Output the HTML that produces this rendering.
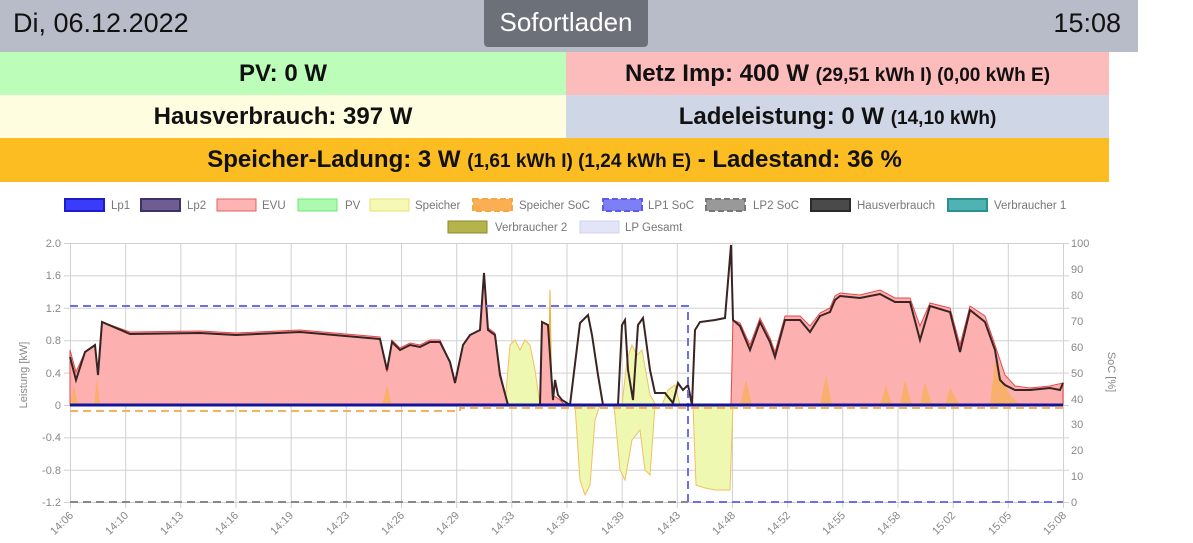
<!DOCTYPE html>
<html><head><meta charset="utf-8"><style>
body{margin:0;width:1193px;height:543px;background:#fff;font-family:"Liberation Sans",sans-serif;overflow:hidden;position:relative}
.hdr{position:absolute;left:0;top:0;width:1138px;height:52px;background:#b8bcc8}
.date{position:absolute;left:13px;top:8px;font-size:27px;color:#111}
.time{position:absolute;right:17px;top:8px;font-size:27px;color:#111}
.mode{position:absolute;left:484px;top:0;width:164px;height:47px;background:#6c7079;border-radius:0 0 4px 4px;color:#fff;font-size:26px;text-align:center;line-height:44px}
.row{position:absolute;height:43px;line-height:43px;text-align:center;font-weight:bold;font-size:24px;color:#111}
.row small{font-size:19px}
</style></head><body>
<div class="hdr"><div class="date">Di, 06.12.2022</div><div class="mode">Sofortladen</div><div class="time">15:08</div></div>
<div class="row" style="left:0;top:52px;width:566px;background:#bcfdba">PV: 0 W</div>
<div class="row" style="left:566px;top:52px;width:543px;background:#fdbcbc">Netz Imp: 400 W <small>(29,51 kWh I) (0,00 kWh E)</small></div>
<div class="row" style="left:0;top:95px;width:566px;background:#fefddf">Hausverbrauch: 397 W</div>
<div class="row" style="left:566px;top:95px;width:543px;background:#cfd6e5">Ladeleistung: 0 W <small>(14,10 kWh)</small></div>
<div class="row" style="left:0;top:138px;width:1109px;height:44px;background:#fbbd21">Speicher-Ladung: 3 W <small>(1,61 kWh I) (1,24 kWh E)</small> - Ladestand: 36 %</div>
<svg style="position:absolute;left:0;top:0" width="1193" height="543" font-family="Liberation Sans, sans-serif" font-size="11" fill="#666">
<g font-size="11.5" fill="#777">
<rect x="65" y="199" width="39" height="12" fill="#3b3bfc" stroke="#1c1cc8" stroke-width="2"/><text x="111" y="209">Lp1</text>
<rect x="141" y="199" width="39" height="12" fill="#6e5d93" stroke="#3d3168" stroke-width="2"/><text x="187" y="209">Lp2</text>
<rect x="217" y="199" width="39" height="12" fill="#feb4b4" stroke="#e06060" stroke-width="1"/><text x="262" y="209">EVU</text>
<rect x="298" y="199" width="39" height="12" fill="#aef9b0" stroke="#6ce870" stroke-width="1"/><text x="345" y="209">PV</text>
<rect x="370" y="199" width="39" height="12" fill="#f6f9b5" stroke="#e8e070" stroke-width="1"/><text x="415" y="209">Speicher</text>
<rect x="473" y="199" width="39" height="12" fill="#fbae52" stroke="#f6a840" stroke-width="2" stroke-dasharray="6,3"/><text x="519" y="209">Speicher SoC</text>
<rect x="603" y="199" width="39" height="12" fill="#7d7ff5" stroke="#5a5ced" stroke-width="2" stroke-dasharray="6,3"/><text x="648" y="209">LP1 SoC</text>
<rect x="706" y="199" width="39" height="12" fill="#999" stroke="#777" stroke-width="2" stroke-dasharray="6,3"/><text x="753" y="209">LP2 SoC</text>
<rect x="811" y="199" width="39" height="12" fill="#4a4a4a" stroke="#2a2a2a" stroke-width="2"/><text x="857" y="209">Hausverbrauch</text>
<rect x="948" y="199" width="39" height="12" fill="#4fb3b3" stroke="#2a9090" stroke-width="2"/><text x="994" y="209">Verbraucher 1</text>
<rect x="448" y="221" width="39" height="12" fill="#b4b34c" stroke="#8c8a28" stroke-width="1"/><text x="495" y="231">Verbraucher 2</text>
<rect x="580" y="221" width="39" height="12" fill="#e4e4f9" stroke="#cfd0f0" stroke-width="1"/><text x="625" y="231">LP Gesamt</text>
</g>
<g stroke="#d0d0d0" stroke-width="1">
<line x1="64" y1="243.5" x2="1069" y2="243.5"/><line x1="64" y1="275.9" x2="1069" y2="275.9"/><line x1="64" y1="308.3" x2="1069" y2="308.3"/><line x1="64" y1="340.7" x2="1069" y2="340.7"/><line x1="64" y1="373.1" x2="1069" y2="373.1"/><line x1="64" y1="405.5" x2="1069" y2="405.5"/><line x1="64" y1="437.9" x2="1069" y2="437.9"/><line x1="64" y1="470.3" x2="1069" y2="470.3"/><line x1="64" y1="502.5" x2="1069" y2="502.5"/>
<line x1="70.5" y1="243" x2="70.5" y2="508"/><line x1="125.7" y1="243" x2="125.7" y2="508"/><line x1="180.8" y1="243" x2="180.8" y2="508"/><line x1="236" y1="243" x2="236" y2="508"/><line x1="291.2" y1="243" x2="291.2" y2="508"/><line x1="346.3" y1="243" x2="346.3" y2="508"/><line x1="401.5" y1="243" x2="401.5" y2="508"/><line x1="456.7" y1="243" x2="456.7" y2="508"/><line x1="511.8" y1="243" x2="511.8" y2="508"/><line x1="567" y1="243" x2="567" y2="508"/><line x1="622.2" y1="243" x2="622.2" y2="508"/><line x1="677.3" y1="243" x2="677.3" y2="508"/><line x1="732.5" y1="243" x2="732.5" y2="508"/><line x1="787.7" y1="243" x2="787.7" y2="508"/><line x1="842.8" y1="243" x2="842.8" y2="508"/><line x1="898" y1="243" x2="898" y2="508"/><line x1="953.2" y1="243" x2="953.2" y2="508"/><line x1="1008.3" y1="243" x2="1008.3" y2="508"/><line x1="1063.5" y1="243" x2="1063.5" y2="508"/>
</g>
<g text-anchor="end" fill="#888">
<text x="61" y="247">2.0</text><text x="61" y="279">1.6</text><text x="61" y="312">1.2</text><text x="61" y="344">0.8</text><text x="61" y="377">0.4</text><text x="61" y="409">0</text><text x="61" y="441">-0.4</text><text x="61" y="474">-0.8</text><text x="61" y="506">-1.2</text>
</g>
<g fill="#888">
<text x="1071" y="247">100</text><text x="1071" y="273">90</text><text x="1071" y="299">80</text><text x="1071" y="325">70</text><text x="1071" y="351">60</text><text x="1071" y="377">50</text><text x="1071" y="403">40</text><text x="1071" y="428">30</text><text x="1071" y="454">20</text><text x="1071" y="480">10</text><text x="1071" y="506">0</text>
</g>
<text transform="translate(27,375) rotate(-90)" text-anchor="middle" fill="#888">Leistung [kW]</text>
<text transform="translate(1108,372) rotate(90)" text-anchor="middle" fill="#888">SoC [%]</text>
<g fill="#888" text-anchor="end">
<text transform="translate(74,516) rotate(-45)">14:06</text><text transform="translate(129,516) rotate(-45)">14:10</text><text transform="translate(184,516) rotate(-45)">14:13</text><text transform="translate(239,516) rotate(-45)">14:16</text><text transform="translate(294,516) rotate(-45)">14:19</text><text transform="translate(350,516) rotate(-45)">14:23</text><text transform="translate(405,516) rotate(-45)">14:26</text><text transform="translate(460,516) rotate(-45)">14:29</text><text transform="translate(515,516) rotate(-45)">14:33</text><text transform="translate(570,516) rotate(-45)">14:36</text><text transform="translate(625,516) rotate(-45)">14:39</text><text transform="translate(681,516) rotate(-45)">14:43</text><text transform="translate(736,516) rotate(-45)">14:48</text><text transform="translate(791,516) rotate(-45)">14:52</text><text transform="translate(846,516) rotate(-45)">14:55</text><text transform="translate(901,516) rotate(-45)">14:58</text><text transform="translate(956,516) rotate(-45)">15:02</text><text transform="translate(1012,516) rotate(-45)">15:05</text><text transform="translate(1067,516) rotate(-45)">15:08</text>
</g>
<path d="M505,405 L510,345 515,340 520,350 525,340 530,345 535,370 540,405Z M622,405 L627,360 632,345 637,355 642,350 650,395 656,405Z M662,405 L668,390 675,385 680,405Z" fill="#eef8b0" stroke="#f2c060" stroke-width="1"/>
<path d="M575,405 L580,480 585,495 590,485 595,420 600,405Z M614,405 L620,470 625,480 632,440 640,430 645,470 650,475 655,405Z M693,405 L696,485 705,488 715,490 730,490 733,405Z" fill="#eef8b0" stroke="#f2c060" stroke-width="1"/>
<path d="M548,405 L550,290 552,405Z" fill="#f6c050" stroke="#f2b040" stroke-width="1"/>
<path d="M70,405 L70,350 76,372 85,352 95,345 98,372 102,322 130,332 200,331 236,333 300,330 380,337 387,372 392,340 400,348 410,343 420,345 430,340 440,340 450,362 455,380 463,345 470,335 480,330 484,273 488,328 495,333 500,372 508,405 540,405 542,322 548,325 553,395 560,400 565,405 731,405 733,320 740,323 750,345 760,318 770,338 775,352 785,316 800,316 810,326 820,313 830,308 835,296 840,293 860,295 880,290 895,298 910,298 920,326 930,303 950,308 960,345 970,306 985,316 995,345 1005,375 1015,386 1030,388 1050,386 1063,383 1063,405Z" fill="#fdb0b0" stroke="#e84848" stroke-width="1"/>
<path d="M70,405 L74,385 78,405 Z M94,405 L97,378 100,405Z M382,405 L387,385 392,405Z M740,405 L746,380 752,405Z M820,405 L826,375 832,405Z M880,405 L886,385 892,405Z M900,405 L905,380 912,405Z M920,405 L925,382 932,405Z M945,405 L950,388 960,405Z M990,405 L995,360 1000,375 1010,395 1020,405Z" fill="#f7b060" opacity="0.85"/>
<polyline fill="none" stroke="#3a2323" stroke-width="2" points="70,357 76,380 85,352 95,345 98,375 102,322 130,334 200,333 236,335 300,332 380,339 387,370 392,342 400,350 410,345 420,347 430,342 440,342 450,362 455,383 463,345 470,335 480,330 484,273 488,330 495,335 500,375 508,405 540,405 542,322 548,325 553,400 555,380 558,395 562,400 570,405 580,323 588,315 592,335 598,375 603,405 618,405 622,325 625,320 628,370 633,400 638,325 643,318 650,370 655,393 665,393 673,403 678,383 683,390 688,385 692,405 695,330 700,322 715,320 725,318 731,245 733,320 740,326 750,350 760,322 770,342 775,357 785,320 800,320 810,332 820,316 830,312 835,300 840,296 860,298 880,294 895,302 910,302 920,340 930,306 950,312 960,352 970,310 985,322 995,350 1000,380 1005,385 1015,390 1030,390 1050,388 1060,390 1063,383"/>
<polyline fill="none" stroke="#6e6ee8" stroke-width="2" stroke-dasharray="8,5" points="70,306 688,306 688,502 1063,502"/>
<line x1="70" y1="502" x2="688" y2="502" stroke="#888" stroke-width="2" stroke-dasharray="8,5"/>
<polyline fill="none" stroke="#f6b060" stroke-width="2" stroke-dasharray="8,5" points="70,411 460,411 460,408 1063,408"/>
<line x1="70" y1="405" x2="1063" y2="405" stroke="#14149a" stroke-width="3"/>
</svg>
</body></html>
